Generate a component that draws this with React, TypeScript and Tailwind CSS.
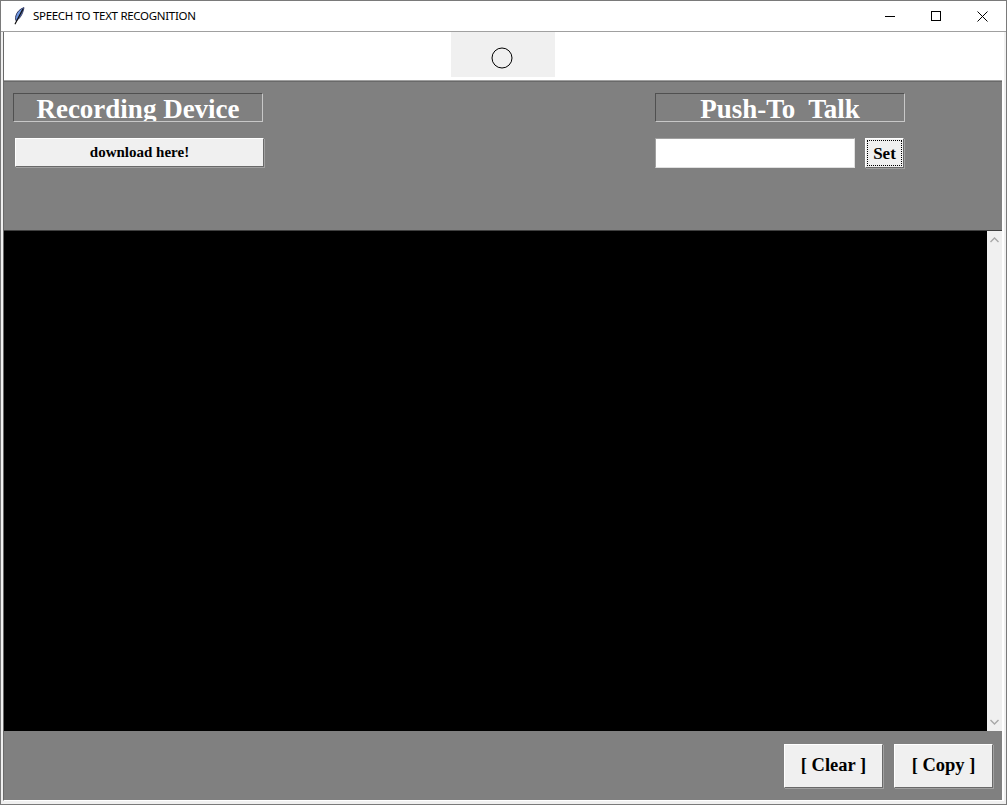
import React from "react";

const serif = { fontFamily: '"Liberation Serif", "Times New Roman", serif' };

function Feather() {
  return (
    <svg width="12" height="18" viewBox="0 0 12 18">
      <defs>
        <linearGradient id="fg" x1="0" y1="0" x2="1" y2="1">
          <stop offset="0" stopColor="#a8ccff" />
          <stop offset="1" stopColor="#1f4fb8" />
        </linearGradient>
      </defs>
      <path d="M11 0.6 C7 1.8 3.8 5 2.8 9 C2.2 11.2 2.6 12.8 3.1 13.8 C6.4 12 9.6 8 11 0.6 Z" fill="url(#fg)" stroke="#1a1a40" strokeWidth="0.8" />
      <path d="M9.6 2.6 L2.2 16.8" stroke="#111" strokeWidth="1.2" strokeLinecap="round" />
    </svg>
  );
}

function TitleBar() {
  return (
    <div className="h-[30px] flex items-center bg-white shrink-0">
      <div className="ml-[12px] w-[12px] h-[18px] flex items-center">
        <Feather />
      </div>
      <div
        className="ml-[8px] text-[11.5px] text-black tracking-[-0.3px]"
        style={{ fontFamily: '"Noto Sans", "Open Sans", sans-serif' }}
      >
        SPEECH TO TEXT RECOGNITION
      </div>
      <div className="ml-auto flex items-center">
        <div className="w-[46px] h-[30px] flex items-center justify-center">
          <svg width="10" height="10" viewBox="0 0 10 10">
            <line x1="0" y1="5.5" x2="10" y2="5.5" stroke="#000" strokeWidth="1" />
          </svg>
        </div>
        <div className="w-[46px] h-[30px] flex items-center justify-center">
          <svg width="10" height="10" viewBox="0 0 10 10">
            <rect x="0.5" y="0.5" width="9" height="9" fill="none" stroke="#000" strokeWidth="1" />
          </svg>
        </div>
        <div className="w-[46px] h-[30px] flex items-center justify-center mr-[1px]">
          <svg width="11" height="11" viewBox="0 0 11 11">
            <path d="M0.5 0.5 L10.5 10.5 M10.5 0.5 L0.5 10.5" stroke="#000" strokeWidth="1" />
          </svg>
        </div>
      </div>
    </div>
  );
}

function LabelBox({ text }: { text: string }) {
  return (
    <div className="w-[250px] h-[29px] border border-t-[#505050] border-l-[#505050] border-r-[#c8c8c8] border-b-[#c8c8c8] overflow-hidden bg-[#808080]">
      <div
        className="text-[27px] leading-[27px] font-bold text-white text-center whitespace-pre pt-[2px]"
        style={serif}
      >
        {text}
      </div>
    </div>
  );
}

function RaisedButton({
  children,
  className,
}: {
  children: React.ReactNode;
  className: string;
}) {
  return (
    <div
      className={
        "bg-[#f0f0f0] border border-t-white border-l-white border-r-[#696969] border-b-[#696969] shadow-[1px_1px_0_#a0a0a0] flex items-center justify-center font-bold text-black " +
        className
      }
      style={serif}
    >
      {children}
    </div>
  );
}

export default function App() {
  return (
    <div className="w-[1007px] h-[805px] border border-[#7a7a7a] bg-white flex flex-col overflow-hidden">
      <TitleBar />
      <div className="flex-1 flex flex-col border-t border-[#a0a0a0] bg-[#f0f0f0] pl-[2px] pr-[2px] pb-[3px]">
        <div className="flex-1 flex flex-col border-l border-[#696969] border-r-2 border-r-white border-b border-b-white">
          {/* top white strip */}
          <div className="h-[48px] bg-white flex justify-center shrink-0">
            <div className="w-[104px] h-[45px] bg-[#f0f0f0] flex justify-center pt-[15px] pr-[3px]">
              <svg width="22" height="22" viewBox="0 0 22 22">
                <circle cx="11" cy="11" r="10" fill="none" stroke="#000" strokeWidth="1" />
              </svg>
            </div>
          </div>
          <div className="h-[1px] bg-[#a0a0a0] shrink-0" />
          <div className="h-[1px] bg-[#696969] shrink-0" />
          {/* control panel */}
          <div className="h-[149px] bg-[#808080] flex justify-between pl-[9px] pr-[97px] pt-[11px] border-b border-[#404040] shrink-0">
            <div className="flex flex-col gap-[16px]">
              <LabelBox text="Recording Device" />
              <RaisedButton className="ml-[2px] w-[249px] h-[29px] text-[15px]">
                download here!
              </RaisedButton>
            </div>
            <div className="flex flex-col gap-[16px]">
              <LabelBox text="Push-To  Talk" />
              <div className="flex gap-[10px]">
                <div className="w-[200px] h-[30px] bg-white border border-t-[#a0a0a0] border-l-[#a0a0a0] border-r-[#e0e0e0] border-b-[#e0e0e0]" />
                <RaisedButton className="w-[39px] h-[30px] text-[17px]">
                  <div className="w-[35px] h-[26px] border border-dotted border-black flex items-center justify-center leading-none">
                    Set
                  </div>
                </RaisedButton>
              </div>
            </div>
          </div>
          {/* text area */}
          <div className="flex-1 flex">
            <div className="flex-1 bg-black" />
            <div className="w-[15px] bg-[#f0f0f0] flex flex-col items-center justify-between py-[6px]">
              <svg width="9" height="6" viewBox="0 0 9 6">
                <path d="M0.5 5 L4.5 1 L8.5 5" fill="none" stroke="#a8a8a8" strokeWidth="1.4" />
              </svg>
              <svg width="9" height="6" viewBox="0 0 9 6">
                <path d="M0.5 1 L4.5 5 L8.5 1" fill="none" stroke="#a8a8a8" strokeWidth="1.4" />
              </svg>
            </div>
          </div>
          {/* bottom panel */}
          <div className="h-[69px] bg-[#808080] flex justify-end items-start gap-[11px] pt-[13px] pr-[9px] shrink-0">
            <RaisedButton className="w-[99px] h-[44px] text-[18.5px]">
              [ Clear ]
            </RaisedButton>
            <RaisedButton className="w-[99px] h-[44px] text-[18.5px]">
              [ Copy ]
            </RaisedButton>
          </div>
        </div>
      </div>
    </div>
  );
}
